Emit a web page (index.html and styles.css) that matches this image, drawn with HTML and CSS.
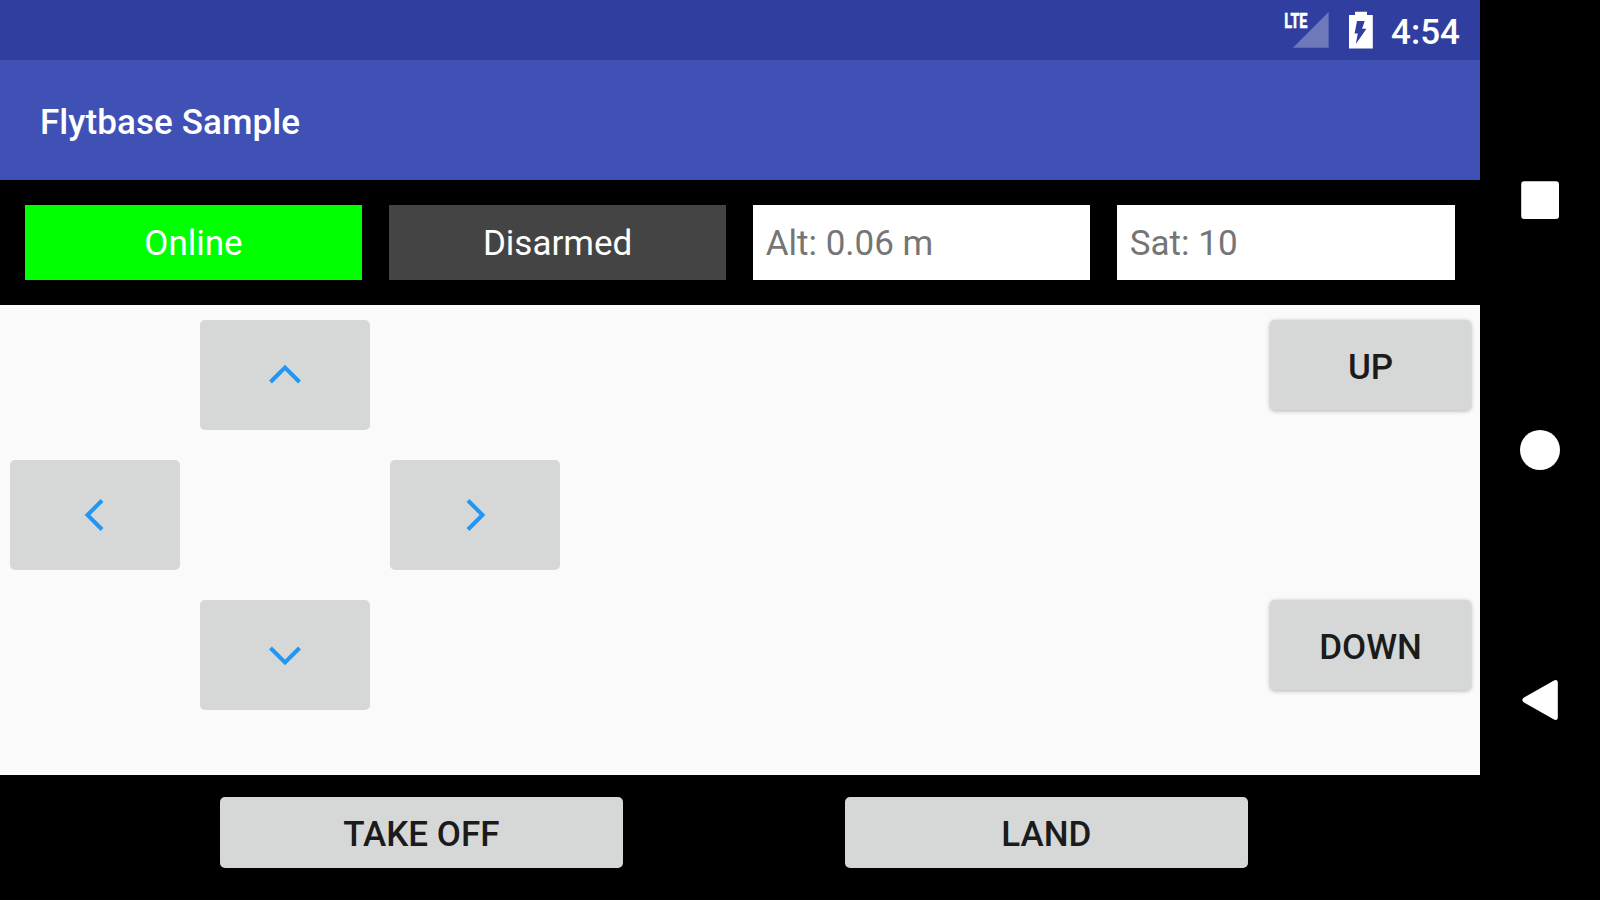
FILE: index.html
```html
<!DOCTYPE html>
<html lang="en">
<head>
<meta charset="utf-8">
<title>Flytbase Sample</title>
<link rel="stylesheet" href="styles.css">
</head>
<body>
<div class="device">
  <div class="app">
    <div class="status-bar">
      <svg class="signal" width="46" height="60" viewBox="1284 0 46 60">
        <path d="M1293 47.7 1328.6 12V47.7Z" fill="#fff" fill-opacity=".3"/>
        <text class="lte" x="1284.2" y="27.6" textLength="23.3" lengthAdjust="spacingAndGlyphs">LTE</text>
      </svg>
      <svg class="battery" width="24" height="60" viewBox="1349 0 24 60">
        <path fill="#fff" fill-rule="evenodd" d="M1355 11.8h12v3.2h5.8v33.6h-23.8V15h6zM1357 21l-2.4 12.4h3.2l-2 10.5 10.7-15.2h-4.4l2.6-7.7z"/>
      </svg>
      <span class="clock">4:54</span>
    </div>
    <header class="app-bar"><h1 class="title">Flytbase Sample</h1></header>
    <section class="telemetry">
      <div class="chip online">Online</div>
      <div class="chip disarmed">Disarmed</div>
      <div class="chip reading">Alt: 0.06 m</div>
      <div class="chip reading">Sat: 10</div>
    </section>
    <main class="controls">
      <div class="dpad">
        <button class="pad forward" aria-label="Forward"><svg class="chevron" viewBox="0 0 60 60"><path d="M15.5 37 30 22.5 44.5 37"/></svg></button>
        <button class="pad left" aria-label="Left"><svg class="chevron" viewBox="0 0 60 60"><path d="M37 15.5 22.5 30 37 44.5"/></svg></button>
        <button class="pad right" aria-label="Right"><svg class="chevron" viewBox="0 0 60 60"><path d="M23 15.5 37.5 30 23 44.5"/></svg></button>
        <button class="pad back" aria-label="Back"><svg class="chevron" viewBox="0 0 60 60"><path d="M15.5 23 30 37.5 44.5 23"/></svg></button>
      </div>
      <div class="altitude">
        <button class="btn raised">UP</button>
        <button class="btn raised">DOWN</button>
      </div>
    </main>
    <footer class="actions">
      <button class="btn flat">TAKE OFF</button>
      <button class="btn flat">LAND</button>
    </footer>
  </div>
  <nav class="nav-bar">
    <svg class="nav-icon" viewBox="0 0 60 60"><rect x="11.2" y="11.2" width="37.8" height="37.8" rx="3"/></svg>
    <svg class="nav-icon" viewBox="0 0 60 60"><circle cx="30" cy="30" r="20"/></svg>
    <svg class="nav-icon" viewBox="0 0 60 60"><path d="M44 10.4Q47.8 9 47.8 13V47Q47.8 51 44 49.6L13.6 32.2Q11 30 13.6 27.8Z"/></svg>
  </nav>
</div>
</body>
</html>
```
FILE: styles.css
```css
* { box-sizing: border-box; }

body {
  margin: 0;
  background: #000;
  font-family: Roboto, "Liberation Sans", sans-serif;
  font-size: 35px;
  line-height: 41px;
}

button {
  margin: 0;
  padding: 0;
  border: 0;
  font: inherit;
  background: #d6d8d7;
  border-radius: 5px;
}

.device {
  display: flex;
  width: 1600px;
  height: 900px;
  overflow: hidden;
}

.app {
  display: flex;
  flex-direction: column;
  width: 1480px;
}

.status-bar {
  display: flex;
  justify-content: flex-end;
  align-items: center;
  height: 60px;
  padding-right: 20px;
  background: #303f9f;
  color: #fff;
}

.signal { margin-right: 19px; }
.battery { margin-right: 18px; }

.lte {
  fill: #fff;
  stroke: #fff;
  stroke-width: .6;
  font-size: 20.5px;
  font-weight: 700;
}

.clock {
  padding-top: 5px;
  font-weight: 500;
}

.app-bar {
  display: flex;
  align-items: center;
  height: 120px;
  padding: 4px 0 0 40px;
  background: #3f51b5;
  color: #fff;
}

.title {
  margin: 0;
  font-size: 35px;
  font-weight: 500;
  letter-spacing: .08px;
}

.telemetry {
  display: grid;
  grid-template-columns: 337px 337px 337px 1fr;
  gap: 27.1px;
  height: 125px;
  padding: 25px;
  background: #000;
}

.chip {
  display: flex;
  align-items: center;
  justify-content: center;
  padding: 1px 12.5px 0;
  color: #fff;
}

.online { background: #0f0; }
.disarmed { background: #444; }

.reading {
  justify-content: flex-start;
  background: #fff;
  color: #757575;
}

.controls {
  display: flex;
  justify-content: space-between;
  align-items: flex-start;
  height: 470px;
  padding: 15px 9px 0 10px;
  background: #fafafa;
}

.dpad {
  display: grid;
  grid-template-columns: repeat(3, 170px);
  grid-template-rows: repeat(3, 110px);
  gap: 30px 20px;
  grid-template-areas: ". forward ." "left . right" ". back .";
}

.pad {
  display: flex;
  align-items: center;
  justify-content: center;
}

.forward { grid-area: forward; }
.left { grid-area: left; }
.right { grid-area: right; }
.back { grid-area: back; }

.chevron {
  width: 60px;
  height: 60px;
  fill: none;
  stroke: #2196f3;
  stroke-width: 4;
}

.altitude {
  display: flex;
  flex-direction: column;
  gap: 190px;
}

.btn {
  padding-top: 5px;
  color: #1b1b1b;
  font-weight: 500;
}

.raised {
  width: 201px;
  height: 90px;
  box-shadow: 0 1px 4px rgba(0, 0, 0, .3);
}

.actions {
  display: flex;
  gap: 222.3px;
  height: 125px;
  padding: 22.3px 0 0 220px;
  background: #000;
}

.flat {
  width: 402.7px;
  height: 70.4px;
}

.nav-bar {
  display: flex;
  flex-direction: column;
  align-items: center;
  gap: 190px;
  width: 120px;
  padding-top: 170px;
  background: #000;
}

.nav-icon {
  width: 60px;
  height: 60px;
  fill: #fff;
}
```
